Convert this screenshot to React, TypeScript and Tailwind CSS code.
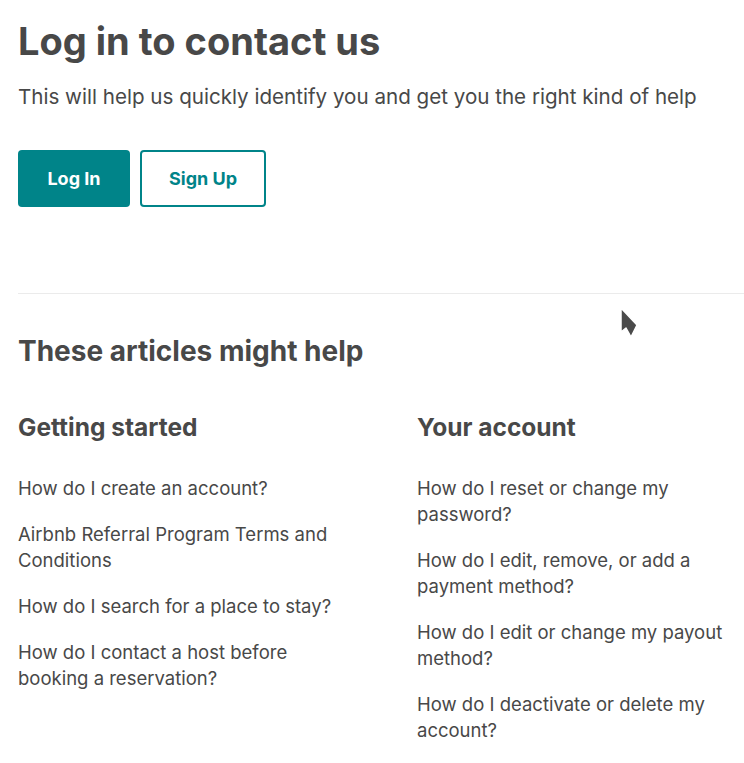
import React from "react"

const gettingStarted = [
  "How do I create an account?",
  "Airbnb Referral Program Terms and Conditions",
  "How do I search for a place to stay?",
  "How do I contact a host before booking a reservation?",
]

const yourAccount = [
  "How do I reset or change my password?",
  "How do I edit, remove, or add a payment method?",
  "How do I edit or change my payout method?",
  "How do I deactivate or delete my account?",
]

function ArticleColumn({ title, items }: { title: string; items: string[] }) {
  return (
    <div>
      <h3 className="text-[24.5px] font-bold leading-[28px] text-[#484848]">{title}</h3>
      <ul className="mt-[34px] flex flex-col gap-[20px]">
        {items.map((item) => (
          <li key={item} className="max-w-[330px] text-[18.5px] leading-[26px] text-[#484848]">
            <a href="#">{item}</a>
          </li>
        ))}
      </ul>
    </div>
  )
}

export default function App() {
  return (
    <div
      className="relative min-h-screen overflow-hidden bg-white pl-[18px]"
      style={{ fontFamily: "Inter, 'Noto Sans', sans-serif" }}
    >
      <section className="pt-[17px]">
        <h1 className="text-[38px] font-bold leading-[48px] text-[#484848]">Log in to contact us</h1>
        <p className="mt-[18px] text-[20.6px] leading-[28px] text-[#484848]">
          This will help us quickly identify you and get you the right kind of help
        </p>
        <div className="mt-[39px] flex gap-[10px]">
          <button className="h-[57px] w-[112px] rounded-[4px] bg-[#008489] text-[18px] font-bold text-white">
            Log In
          </button>
          <button className="h-[57px] w-[126px] rounded-[4px] border-2 border-[#008489] bg-white text-[18px] font-bold text-[#008489]">
            Sign Up
          </button>
        </div>
      </section>

      <hr className="mt-[86px] border-t border-[#ebebeb]" />

      <section className="pt-[39px]">
        <h2 className="text-[28px] font-bold leading-[36px] text-[#484848]">These articles might help</h2>
        <div className="mt-[44px] grid grid-cols-[399px_399px]">
          <ArticleColumn title="Getting started" items={gettingStarted} />
          <ArticleColumn title="Your account" items={yourAccount} />
        </div>
      </section>

      {/* mouse pointer captured in the screenshot */}
      <svg className="absolute left-[619px] top-[306px]" width="22" height="34" viewBox="0 0 22 34">
        <polygon points="2,2 2,26 7,22 12,31 18,19" fill="#4a4a4a" stroke="#fff" strokeWidth="1.5" strokeLinejoin="round" />
      </svg>
    </div>
  )
}
